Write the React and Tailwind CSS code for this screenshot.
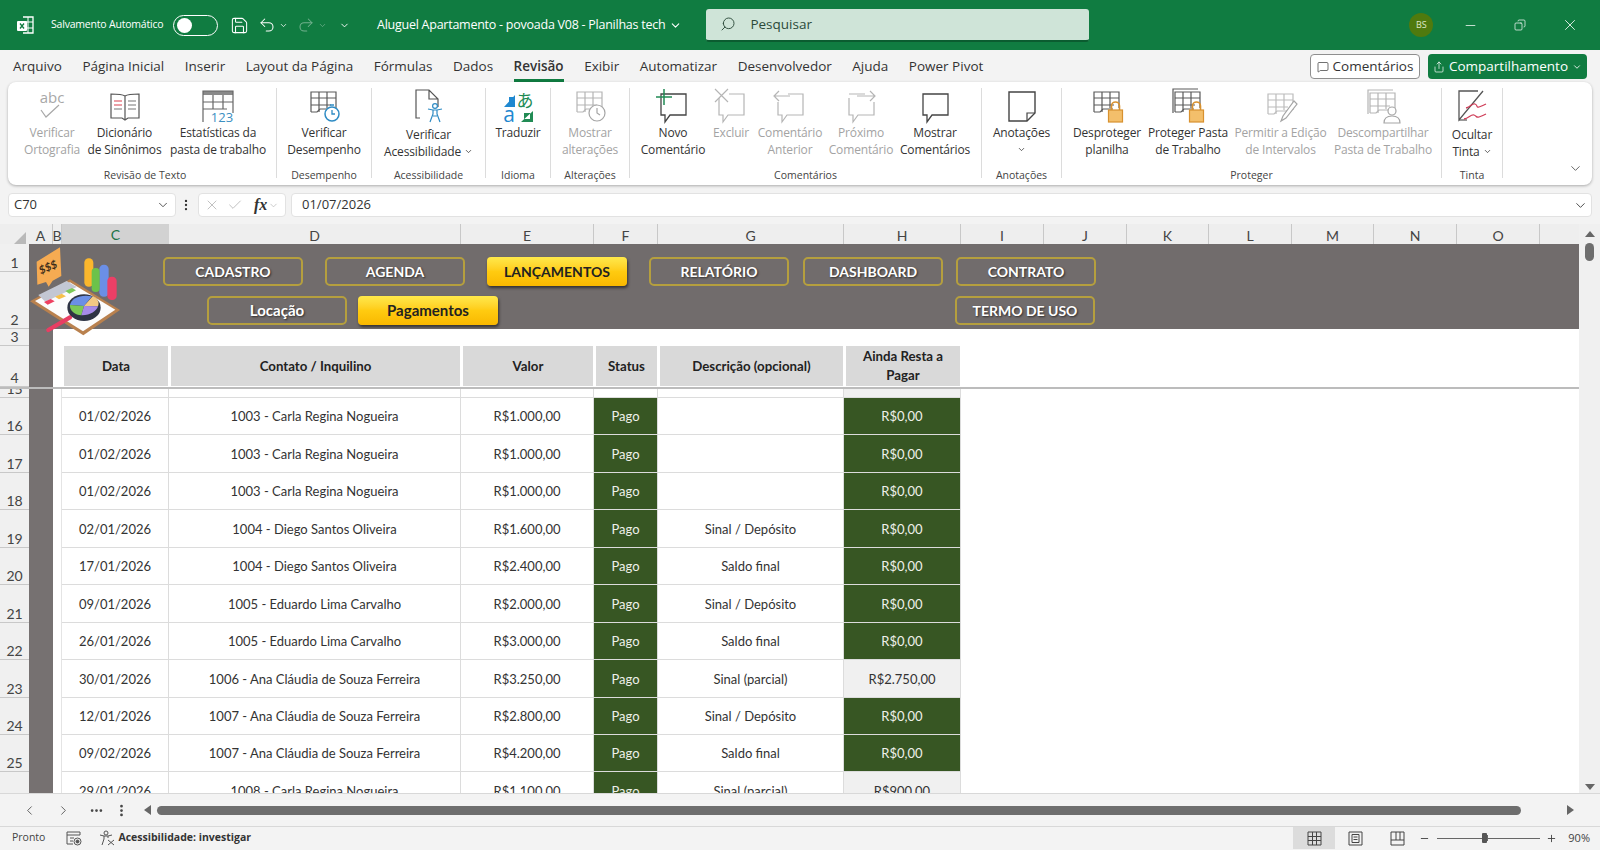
import React from 'react';
import { ChevronDown, ChevronLeft, ChevronRight, Minus, Plus, Search, X, Check, Undo2, Redo2, Save, Copy, MessageSquare, Share, MoreHorizontal, MoreVertical } from 'lucide-react';

const GRID = 'grid grid-cols-[29px_24px_9px_107px_292px_133px_64px_186px_117px_83px_83px_82px_83px_82px_83px_83px_39px]';

/* ---------- ribbon icons ---------- */
const Svg = ({ children }) => (
  <svg className="overflow-visible" width="36" height="36" viewBox="0 0 36 36" fill="none" strokeWidth="1.2">{children}</svg>
);

const Table = ({ c = '#5a5a5a', x = 0, y = 0, shadow }) => (
  <g transform={`translate(${x} ${y})`} stroke={c}>
    {shadow && <path d="M3 25V1h25" />}
    <path d="M5 24V4h25v16M5 10h25M5 17h20M13 4v20M21 4v16" />
    <path d="M5 24h6l3-3h10" />
  </g>
);

const Bubble = ({ c = '#444', fill = 'none' }) => (
  <path d="M6 6h25v21H15l-5 7v-7H6z" stroke={c} fill={fill} strokeWidth="1.3" />
);

const Lock = () => (
  <g>
    <path d="M22.5 22v-4a4 4 0 0 1 8 0v4" stroke="#d8912f" strokeWidth="1.6" />
    <rect x="19.5" y="22" width="14" height="12" fill="#f3bf6b" stroke="#d8912f" />
  </g>
);

const icons = {
  spell: (
    <Svg>
      <text x="18" y="15" textAnchor="middle" fontSize="15" fill="#a8a8a8" fontFamily="'Open Sans'">abc</text>
      <path d="M7 22l5 7 13-12" stroke="#a8a8a8" />
    </Svg>
  ),
  book: (
    <Svg>
      <path d="M18 8c-3-2-8-2-14-2v24h11l3 2 3-2h11V6c-6 0-11 0-14 2zM18 8v23" stroke="#555" />
      <path d="M7 13h8M7 17h8" stroke="#d9404e" />
      <path d="M7 21h8M21 13h8M21 17h8M21 21h8" stroke="#777" />
    </Svg>
  ),
  stats: (
    <Svg>
      <rect x="3" y="3" width="30" height="4" fill="#8a8a8a" />
      <path d="M3 34V3h30v22M3 14h30M13 7v14M23 7v14M3 21h24" stroke="#666" />
      <text x="22" y="34" textAnchor="middle" fontSize="13" fill="#3b8fc2" fontFamily="'Open Sans'">123</text>
    </Svg>
  ),
  perf: (
    <Svg>
      <Table />
      <circle cx="26" cy="26" r="7" fill="#fff" stroke="#2e8bc4" strokeWidth="1.5" />
      <path d="M26 22v4h3M24 17h4" stroke="#2e8bc4" strokeWidth="1.3" />
    </Svg>
  ),
  access: (
    <Svg>
      <path d="M9 30H5V2h13l9 9v8M18 2v9h9" stroke="#555" />
      <circle cx="24" cy="18" r="2.4" stroke="#2e8bc4" />
      <path d="M17 21l5 1h4l5-1M22 22v4l-3 8M26 22v4l3 8M22 28h4" stroke="#2e8bc4" />
    </Svg>
  ),
  translate: (
    <Svg>
      <path d="M15 7v12H4zM9 9h6v6H9z" fill="#1f88d0" />
      <text x="9" y="34" textAnchor="middle" fontSize="21" fill="#1f88d0" fontFamily="'Open Sans'">a</text>
      <text x="25" y="19" textAnchor="middle" fontSize="17" fill="#218b54" fontFamily="'Noto Sans CJK JP'">あ</text>
      <path d="M21 34h12V23zM24 25h6v6h-6z" fill="#218b54" />
    </Svg>
  ),
  changes: (
    <Svg>
      <Table c="#b5b5b5" />
      <circle cx="25" cy="25" r="8" fill="#fff" stroke="#a5a5a5" />
      <path d="M25 20v5l3 2" stroke="#a5a5a5" />
    </Svg>
  ),
  newComment: (
    <Svg>
      <Bubble />
      <path d="M1 9h16M9 1v16" stroke="#218b54" strokeWidth="1.5" />
    </Svg>
  ),
  deleteComment: (
    <Svg>
      <path d="M6 10v17h4v7l5-7h16V6H16" stroke="#b5b5b5" />
      <path d="M2 1l13 13M15 1L2 14" stroke="#b5b5b5" />
    </Svg>
  ),
  prevComment: (
    <Svg>
      <path d="M6 14v13h4v7l5-7h16V6H16" stroke="#b5b5b5" />
      <path d="M18 8H3M7 3L2 8l5 5" stroke="#b5b5b5" />
    </Svg>
  ),
  nextComment: (
    <Svg>
      <path d="M6 10v17h4v7l5-7h16V14M22 6H6" stroke="#b5b5b5" />
      <path d="M14 8h18M27 3l5 5-5 5" stroke="#b5b5b5" />
    </Svg>
  ),
  comments: (
    <Svg>
      <Bubble />
    </Svg>
  ),
  note: (
    <Svg>
      <path d="M5 4h26v21l-8 8H5z" stroke="#444" strokeWidth="1.4" />
      <path d="M31 25h-8v8" stroke="#444" />
    </Svg>
  ),
  unprotect: (
    <Svg>
      <Table />
      <Lock />
    </Svg>
  ),
  protect: (
    <Svg>
      <Table shadow />
      <Lock />
    </Svg>
  ),
  allow: (
    <Svg>
      <Table c="#bcbcbc" y="2" />
      <path d="M31 13l3 3-11 14-5 3 2-5z" fill="#fff" stroke="#a5a5a5" />
    </Svg>
  ),
  unshare: (
    <Svg>
      <Table c="#b5b5b5" shadow y="1" />
      <circle cx="27" cy="23" r="4" fill="#fff" stroke="#a5a5a5" />
      <path d="M19 35c0-5 3-7 8-7s8 2 8 7z" fill="#fff" stroke="#a5a5a5" />
    </Svg>
  ),
  ink: (
    <Svg>
      <path d="M24 3H5v29l24-29" stroke="#555" strokeWidth="1.3" />
      <path d="M5 32h8" stroke="#555" />
      <path d="M12 20c5-1 6-5 9-4s1 4 4 3 5-2 7-3M10 31c5-1 7-5 10-4s2 3 5 2 5-2 7-3" stroke="#cf3d58" strokeWidth="1.3" />
    </Svg>
  ),
};

/* ---------- ribbon data ---------- */
const groups = [
  { label: 'Revisão de Texto', w: 'w-[269px]', pad: 'pl-[6px]', items: [
    { w: 'w-[76px]', lines: ['Verificar', 'Ortografia'], icon: 'spell', off: true },
    { w: 'w-[69px]', lines: ['Dicionário', 'de Sinônimos'], icon: 'book' },
    { w: 'w-[118px]', lines: ['Estatísticas da', 'pasta de trabalho'], icon: 'stats' },
  ] },
  { label: 'Desempenho', w: 'w-[95px]', items: [
    { w: 'w-full', lines: ['Verificar', 'Desempenho'], icon: 'perf' },
  ] },
  { label: 'Acessibilidade', w: 'w-[114px]', items: [
    { w: 'w-full', lines: ['Verificar', 'Acessibilidade'], icon: 'access', chevron: true, low: true },
  ] },
  { label: 'Idioma', w: 'w-[65px]', items: [
    { w: 'w-full', lines: ['Traduzir'], icon: 'translate' },
  ] },
  { label: 'Alterações', w: 'w-[79px]', items: [
    { w: 'w-full', lines: ['Mostrar', 'alterações'], icon: 'changes', off: true },
  ] },
  { label: 'Comentários', w: 'w-[352px]', items: [
    { w: 'w-[86px]', lines: ['Novo', 'Comentário'], icon: 'newComment' },
    { w: 'w-[30px]', lines: ['Excluir'], icon: 'deleteComment', off: true },
    { w: 'w-[88px]', lines: ['Comentário', 'Anterior'], icon: 'prevComment', off: true },
    { w: 'w-[54px]', lines: ['Próximo', 'Comentário'], icon: 'nextComment', off: true },
    { w: 'w-[94px]', lines: ['Mostrar', 'Comentários'], icon: 'comments' },
  ] },
  { label: 'Anotações', w: 'w-[80px]', items: [
    { w: 'w-full', lines: ['Anotações', ''], icon: 'note', chevron: true },
  ] },
  { label: 'Proteger', w: 'w-[380px]', items: [
    { w: 'w-[90px]', lines: ['Desproteger', 'planilha'], icon: 'unprotect' },
    { w: 'w-[72px]', lines: ['Proteger Pasta', 'de Trabalho'], icon: 'protect' },
    { w: 'w-[113px]', lines: ['Permitir a Edição', 'de Intervalos'], icon: 'allow', off: true },
    { w: 'w-[92px]', lines: ['Descompartilhar', 'Pasta de Trabalho'], icon: 'unshare', off: true },
  ] },
  { label: 'Tinta', w: 'w-[61px]', items: [
    { w: 'w-full', lines: ['Ocultar', 'Tinta'], icon: 'ink', chevron: true, low: true },
  ] },
];

const tabs = ['Arquivo', 'Página Inicial', 'Inserir', 'Layout da Página', 'Fórmulas', 'Dados', 'Revisão', 'Exibir', 'Automatizar', 'Desenvolvedor', 'Ajuda', 'Power Pivot'];
const columns = ['A', 'B', 'C', 'D', 'E', 'F', 'G', 'H', 'I', 'J', 'K', 'L', 'M', 'N', 'O'];

const CARLA = '1003 - Carla Regina Nogueira';
const rows = [
  [16, '01/02/2026', CARLA, 'R$1.000,00', '', 'R$0,00'],
  [17, '01/02/2026', CARLA, 'R$1.000,00', '', 'R$0,00'],
  [18, '01/02/2026', CARLA, 'R$1.000,00', '', 'R$0,00'],
  [19, '02/01/2026', '1004 - Diego Santos Oliveira', 'R$1.600,00', 'Sinal / Depósito', 'R$0,00'],
  [20, '17/01/2026', '1004 - Diego Santos Oliveira', 'R$2.400,00', 'Saldo final', 'R$0,00'],
  [21, '09/01/2026', '1005 - Eduardo Lima Carvalho', 'R$2.000,00', 'Sinal / Depósito', 'R$0,00'],
  [22, '26/01/2026', '1005 - Eduardo Lima Carvalho', 'R$3.000,00', 'Saldo final', 'R$0,00'],
  [23, '30/01/2026', '1006 - Ana Cláudia de Souza Ferreira', 'R$3.250,00', 'Sinal (parcial)', 'R$2.750,00'],
  [24, '12/01/2026', '1007 - Ana Cláudia de Souza Ferreira', 'R$2.800,00', 'Sinal / Depósito', 'R$0,00'],
  [25, '09/02/2026', '1007 - Ana Cláudia de Souza Ferreira', 'R$4.200,00', 'Saldo final', 'R$0,00'],
  [26, '29/01/2026', '1008 - Carla Regina Nogueira', 'R$1.100,00', 'Sinal (parcial)', 'R$900,00'],
];

/* ---------- top of the window ---------- */
const TitleBar = () => (
  <header className="flex h-[50px] shrink-0 items-center bg-[#107c41] text-white">
    <svg className="ml-[16px]" width="18" height="20" viewBox="0 0 18 20" fill="none">
      <path d="M7 2h10v16H7" stroke="#fff" strokeWidth="1.3" />
      <path d="M7 7h10M7 13h10M12 2v16" stroke="#fff" />
      <rect x="1" y="6" width="10" height="10" rx="1" fill="#fff" />
      <path d="M4 8.5l4 5M8 8.5l-4 5" stroke="#107c41" strokeWidth="1.3" />
    </svg>
    <span className="ml-[17px] w-[119px] whitespace-nowrap text-[10.5px] tracking-[-0.2px]">Salvamento Automático</span>
    <div className="ml-[3px] flex h-[21px] w-[45px] items-center rounded-full border border-white pl-[3px]">
      <div className="h-[15px] w-[15px] rounded-full bg-white" />
    </div>
    <Save className="ml-[12px]" size={19} strokeWidth={1.3} />
    <Undo2 className="ml-[9px]" size={18} strokeWidth={1.4} />
    <ChevronDown className="ml-[3px]" size={9} />
    <Redo2 className="ml-[9px] opacity-40" size={18} strokeWidth={1.4} />
    <ChevronDown className="ml-[3px] opacity-40" size={9} />
    <ChevronDown className="ml-[12px]" size={11} />
    <span className="ml-[27px] whitespace-nowrap text-[12.5px] tracking-[-0.25px]">Aluguel Apartamento - povoada V08 - Planilhas tech</span>
    <ChevronDown className="ml-[4px]" size={13} />
    <div className="ml-[24px] flex h-[33px] w-[383px] items-center rounded-[3px] border-b-2 border-[#0b5c30] bg-[#cfe4d8] pl-[14px] text-[#2c4a3a]">
      <Search className="-scale-x-100" size={16} strokeWidth={1.4} />
      <span className="ml-[14px] text-[13.5px]">Pesquisar</span>
    </div>
    <div className="ml-[320px] flex h-[24px] w-[24px] items-center justify-center rounded-full bg-[#4f7a0e] text-[9px] text-[#dfe8c8]">BS</div>
    <Minus className="ml-[30px]" size={15} strokeWidth={1.2} />
    <Copy className="ml-[36px] -scale-x-100" size={12} strokeWidth={1.4} />
    <X className="ml-[35px]" size={18} strokeWidth={1.1} />
  </header>
);

const TabBar = () => (
  <nav className="flex h-[32px] shrink-0 items-center pl-[13px] pr-[13px] text-[13.5px] text-[#333]">
    <div className="flex h-full gap-[20.5px]">
      {tabs.map((tab) =>
        tab === 'Revisão' ? (
          <span key={tab} className="flex items-center border-b-[3px] border-[#107c41] pt-[3px] font-semibold">{tab}</span>
        ) : (
          <span key={tab} className="flex items-center whitespace-nowrap">{tab}</span>
        )
      )}
    </div>
    <div className="ml-auto flex items-center gap-[8px] pt-[1px]">
      <button className="flex h-[25px] w-[110px] items-center justify-center gap-[4px] rounded-[4px] border border-[#8f8f8f] bg-white">
        <MessageSquare size={12} strokeWidth={1.4} />
        Comentários
      </button>
      <button className="flex h-[25px] w-[159px] items-center justify-center gap-[4px] rounded-[4px] bg-[#107c41] text-white">
        <Share size={12} strokeWidth={1.4} />
        Compartilhamento
        <ChevronDown size={10} />
      </button>
    </div>
  </nav>
);

const RibbonButton = ({ item }) => {
  const tone = item.off ? 'text-[#a3a3a3]' : 'text-[#333]';
  return (
    <div className={`flex shrink-0 flex-col items-center ${item.w} ${tone}`}>
      <div className="flex h-[36px] items-center justify-center">{icons[item.icon]}</div>
      <div className={`flex flex-col items-center whitespace-nowrap text-[12px] leading-[17px] tracking-[-0.15px] ${item.low ? 'pt-[2px]' : ''}`}>
        {item.lines.map((line, i) => (
          <span key={i} className="flex h-[17px] items-center gap-[3px]">
            {line}
            {item.chevron && i === item.lines.length - 1 && <ChevronDown size={9} />}
          </span>
        ))}
      </div>
    </div>
  );
};

const Ribbon = () => (
  <section className="relative mx-[8px] flex h-[103px] shrink-0 rounded-[8px] bg-white pt-[6px] shadow-[0_1px_3px_rgba(0,0,0,0.3)]">
    {groups.map((g) => (
      <div key={g.label} className={`flex h-[90px] shrink-0 flex-col justify-between border-r border-[#dcdcdc] ${g.w} ${g.pad || ''}`}>
        <div className="flex">
          {g.items.map((item) => (
            <RibbonButton key={item.icon} item={item} />
          ))}
        </div>
        <div className="-mb-[4px] text-center text-[10.5px] leading-[14px] text-[#444]">{g.label}</div>
      </div>
    ))}
    <ChevronDown className="absolute bottom-[9px] right-[9px] text-[#444]" size={15} strokeWidth={1.3} />
  </section>
);

const FormulaBar = () => (
  <div className="mx-[8px] mt-[8px] flex h-[24px] shrink-0 items-center text-[13px] text-[#333]">
    <div className="flex h-full w-[168px] items-center justify-between rounded-[4px] border border-[#e2e2e2] bg-white pl-[5px] pr-[5px]">
      C70
      <ChevronDown size={14} strokeWidth={1.4} />
    </div>
    <MoreVertical className="ml-[3px]" size={14} />
    <div className="ml-[5px] flex h-full w-[88px] items-center rounded-[4px] border border-[#e2e2e2] bg-white pl-[5px] text-[#aaa]">
      <X size={16} strokeWidth={1.1} />
      <Check className="ml-[7px]" size={16} strokeWidth={1.1} />
      <span className="ml-[11px] font-['Liberation_Serif',serif] text-[16px] font-semibold italic text-[#333]">fx</span>
      <ChevronDown className="ml-[1px]" size={11} strokeWidth={1.3} />
    </div>
    <div className="ml-[5px] flex h-full flex-1 items-center justify-between rounded-[4px] border border-[#e2e2e2] bg-white pl-[10px] pr-[3px]">
      01/07/2026
      <ChevronDown size={15} strokeWidth={1.4} />
    </div>
  </div>
);

/* ---------- sheet ---------- */
const NavButton = ({ label, active, size = 'text-[14px]', className = '' }) => (
  <button
    className={
      active
        ? `flex h-[29px] w-[140px] shrink-0 items-center justify-center rounded-[4px] bg-linear-to-b from-[#ffe94a] via-[#ffcb10] to-[#f9b800] pb-[1px] font-bold text-[#222] shadow-[1px_2px_3px_rgba(0,0,0,0.55)] ${size} ${className}`
        : `flex h-[29px] w-[140px] shrink-0 items-center justify-center rounded-[5px] border-2 border-[#b59f3e] pb-[1px] font-bold text-white [text-shadow:1px_1px_2px_rgba(0,0,0,0.6)] ${size} ${className}`
    }
  >
    {label}
  </button>
);

const Logo = () => (
  <svg className="pointer-events-none absolute left-[-9px] top-[-4px] z-10" width="110" height="100" viewBox="0 0 330 300">
    <path d="M50 65L120 22l4 86-26 14-12 18-8-14-26 8z" fill="#f6ab52" />
    <text x="88" y="92" transform="rotate(-22 88 92)" textAnchor="middle" fontSize="32" fontWeight="700" fontStyle="italic" fill="#3b2c1a" fontFamily="Lato">$$$</text>
    <rect x="193" y="55" width="27" height="85" rx="13" fill="#fbb72c" />
    <rect x="238" y="74" width="28" height="96" rx="13" fill="#6b8fe6" />
    <rect x="215" y="84" width="24" height="72" rx="11" fill="#6cc24a" />
    <rect x="262" y="110" width="28" height="70" rx="13" fill="#ec3f66" />
    <path d="M30 184L150 118l150 92-110 76z" fill="#b9814e" />
    <path d="M45 183L150 127l136 82-97 65z" fill="#fcfcfc" />
    <path d="M55 165l85-42 30 18-94 44z" fill="#c3c7d3" />
    <path d="M72 186l20-9 12 7-21 10z" fill="#ee4060" />
    <path d="M105 170l20-9 13 8-21 9z" fill="#f6c04c" />
    <path d="M136 153l20-9 12 7-20 10z" fill="#7cc957" />
    <path d="M85 270l65-38" stroke="#e83e63" strokeWidth="13" strokeLinecap="round" />
    <ellipse cx="192" cy="203" rx="50" ry="40" fill="#2f3444" />
    <path d="M192 198L150 195c4-20 30-32 66-26z" fill="#6b8fe6" />
    <path d="M192 198l26-29c12 4 22 16 16 30z" fill="#f3c983" />
    <path d="M192 198l-42-3c-2 18 16 30 34 31z" fill="#7cc957" />
    <path d="M192 198l42 1c-4 14-24 28-50 27z" fill="#a78be8" />
  </svg>
);

const RowHead = ({ n, className = '' }) => (
  <div className={`flex items-end justify-center overflow-hidden border-b border-[#c8c8c8] bg-[#f0f0f0] text-[14px] leading-[17px] text-[#444] ${className}`}>{n}</div>
);

const DataRow = ({ row }) => {
  const [n, date, contact, value, desc, left] = row;
  const cell = 'flex items-center justify-center border-b border-r border-[#dcdcdc] pt-[2px] whitespace-nowrap';
  return (
    <div className={`${GRID} h-[37.45px] shrink-0 text-[13px] text-[#333]`}>
      <RowHead n={n} />
      <div className="bg-[#767171]" />
      <div className="border-r border-[#e4e4e4]" />
      <div className={cell}>{date}</div>
      <div className={cell}>{contact}</div>
      <div className={cell}>{value}</div>
      <div className={`${cell} bg-[#375623] text-[#eef0ea]`}>Pago</div>
      <div className={cell}>{desc}</div>
      <div className={`${cell} ${left === 'R$0,00' ? 'bg-[#375623] text-[#eef0ea]' : 'bg-[#f0f0f0]'}`}>{left}</div>
    </div>
  );
};

const Sheet = () => (
  <div className="flex h-[570px] shrink-0 border-b border-[#d8d8d8]">
    <div className="flex w-[1579px] flex-col overflow-hidden bg-white">
      {/* column letters */}
      <div className={`${GRID} h-[20px] shrink-0 bg-[#eeeeee] text-[14px] text-[#444]`}>
        <div className="flex items-end justify-end pb-[2px] pr-[3px]">
          <div className="h-0 w-0 border-b-[13px] border-l-[13px] border-b-[#b9b9b9] border-l-transparent" />
        </div>
        {columns.map((c) =>
          c === 'C' ? (
            <div key={c} className="flex items-center justify-center border-b-2 border-[#217346] bg-[#d2d2d2] text-[#217346]">{c}</div>
          ) : (
            <div key={c} className="flex items-center justify-center border-r border-[#c8c8c8]">{c}</div>
          )
        )}
      </div>

      {/* banner with the shapes that float on rows 1 and 2 */}
      <div className="flex h-[85px] shrink-0">
        <div className="flex w-[29px] shrink-0 flex-col">
          <RowHead n="1" className="h-[28px]" />
          <RowHead n="2" className="h-[57px]" />
        </div>
        <div className="relative flex flex-1 flex-col gap-[10px] bg-[#716c6c] pt-[13px]">
          <Logo />
          <div className="flex pl-[134px]">
            <NavButton label="CADASTRO" />
            <NavButton label="AGENDA" className="ml-[22px]" />
            <NavButton label="LANÇAMENTOS" active className="ml-[22px]" />
            <NavButton label="RELATÓRIO" className="ml-[22px]" />
            <NavButton label="DASHBOARD" className="ml-[14px]" />
            <NavButton label="CONTRATO" className="ml-[13px]" />
          </div>
          <div className="flex pl-[178px]">
            <NavButton label="Locação" size="text-[15px]" />
            <NavButton label="Pagamentos" active size="text-[15px]" className="ml-[11px]" />
            <NavButton label="TERMO DE USO" className="ml-[457px]" />
          </div>
        </div>
      </div>

      {/* row 3 */}
      <div className={`${GRID} h-[17px] shrink-0`}>
        <RowHead n="3" />
        <div className="bg-[#767171]" />
      </div>

      {/* row 4, table header */}
      <div className={`${GRID} h-[43px] shrink-0 border-b-2 border-[#bcbcbc] text-[13.25px] font-bold text-[#222]`}>
        <RowHead n="4" className="font-normal" />
        <div className="bg-[#767171]" />
        <div />
        {['Data', 'Contato / Inquilino', 'Valor', 'Status', 'Descrição (opcional)', 'Ainda Resta a Pagar'].map((h) => (
          <div key={h} className="mb-[1px] ml-[2px] mr-[1px] flex items-center justify-center bg-[#d9d9d9] px-[10px] text-center leading-[19px]">{h}</div>
        ))}
      </div>

      {/* frozen rows scroll under here */}
      <div className={`${GRID} h-[9px] shrink-0`}>
        <RowHead n="15" className="items-center" />
        <div className="bg-[#767171]" />
        <div className="border-r border-[#e4e4e4]" />
        <div className="border-b border-r border-[#dcdcdc]" />
        <div className="border-b border-r border-[#dcdcdc]" />
        <div className="border-b border-r border-[#dcdcdc]" />
        <div className="border-b border-r border-[#dcdcdc]" />
        <div className="border-b border-r border-[#dcdcdc]" />
        <div className="border-b border-r border-[#dcdcdc] bg-[#f0f0f0]" />
      </div>
      <div className="flex min-h-0 flex-1 flex-col overflow-hidden">
        {rows.map((row) => (
          <DataRow key={row[0]} row={row} />
        ))}
      </div>
    </div>

    {/* vertical scroll bar */}
    <div className="flex w-[21px] flex-col items-center bg-[#f0f0f0] pt-[7px] pb-[3px]">
      <div className="h-0 w-0 border-x-[5px] border-b-[6px] border-x-transparent border-b-[#666]" />
      <div className="mt-[6px] h-[18px] w-[9px] rounded-full bg-[#6e6e6e]" />
      <div className="mt-auto h-0 w-0 border-x-[5px] border-t-[6px] border-x-transparent border-t-[#666]" />
    </div>
  </div>
);

const ScrollRow = () => (
  <div className="flex h-[32px] shrink-0 items-center text-[#444]">
    <ChevronLeft className="ml-[22px]" size={15} strokeWidth={1.3} />
    <ChevronRight className="ml-[19px]" size={15} strokeWidth={1.3} />
    <MoreHorizontal className="ml-[18px]" size={15} strokeWidth={2.4} />
    <MoreVertical className="ml-[10px]" size={15} strokeWidth={2.4} />
    <div className="ml-[15px] h-0 w-0 border-y-[5px] border-r-[7px] border-y-transparent border-r-[#666]" />
    <div className="ml-[6px] h-[9px] w-[1364px] rounded-full bg-[#6e6e6e]" />
    <div className="ml-[46px] h-0 w-0 border-y-[5px] border-l-[7px] border-y-transparent border-l-[#666]" />
  </div>
);

const StatusBar = () => (
  <footer className="flex h-[23px] shrink-0 items-center border-t border-[#d8d8d8] text-[10.5px] text-[#444]">
    <span className="ml-[12px]">Pronto</span>
    <svg className="ml-[21px]" width="16" height="15" viewBox="0 0 16 15" fill="none" stroke="#555">
      <path d="M1 1h13v3H1zM1 4v9h6M4 7h4M4 10h3" />
      <circle cx="11.5" cy="10.5" r="3.5" />
      <circle cx="11.5" cy="10.5" r="1.5" fill="#555" />
    </svg>
    <svg className="ml-[17px]" width="16" height="16" viewBox="0 0 16 16" fill="none" stroke="#555">
      <circle cx="7" cy="3" r="2" />
      <path d="M1 5l4 1h4l4-1M5 6v3l-2 6M9 6v2" />
      <path d="M9 10l6 5M15 10l-6 5" />
    </svg>
    <span className="ml-[3px] font-bold text-[#333]">Acessibilidade: investigar</span>
    <div className="ml-auto flex h-full w-[42px] items-center justify-center bg-[#dcdcdc]">
      <svg width="15" height="15" viewBox="0 0 15 15" fill="none" stroke="#444">
        <path d="M1 1h13v13H1zM1 5.5h13M1 9.5h13M5.5 1v13M9.5 1v13" />
      </svg>
    </div>
    <svg className="ml-[13px]" width="15" height="15" viewBox="0 0 15 15" fill="none" stroke="#444">
      <path d="M1 1h13v13H1zM4 3.5h7v8H4zM5.5 6h4M5.5 8.500h4" />
    </svg>
    <svg className="ml-[27px]" width="15" height="15" viewBox="0 0 15 15" fill="none" stroke="#444">
      <path d="M1 1h13v13H1zM1 9h13M6 1v8M10 1v8" />
    </svg>
    <Minus className="ml-[14px]" size={11} />
    <div className="relative ml-[7px] flex h-[1px] w-[103px] items-center bg-[#666]">
      <div className="absolute left-[45px] h-[10px] w-[5px] rounded-[1px] bg-[#555]" />
      <div className="absolute left-[50px] h-[6px] w-[1px] bg-[#666]" />
    </div>
    <Plus className="ml-[6px]" size={11} />
    <span className="ml-[11px] mr-[10px] text-[11px]">90%</span>
  </footer>
);

export default function App() {
  return (
    <div className="flex h-[850px] w-[1600px] flex-col overflow-hidden bg-[#f3f3f3] font-['Open_Sans',sans-serif]">
      <TitleBar />
      <TabBar />
      <Ribbon />
      <FormulaBar />
      <div className="h-[7px] shrink-0" />
      <div className="font-['Lato',sans-serif]">
        <Sheet />
      </div>
      <ScrollRow />
      <StatusBar />
    </div>
  );
}
